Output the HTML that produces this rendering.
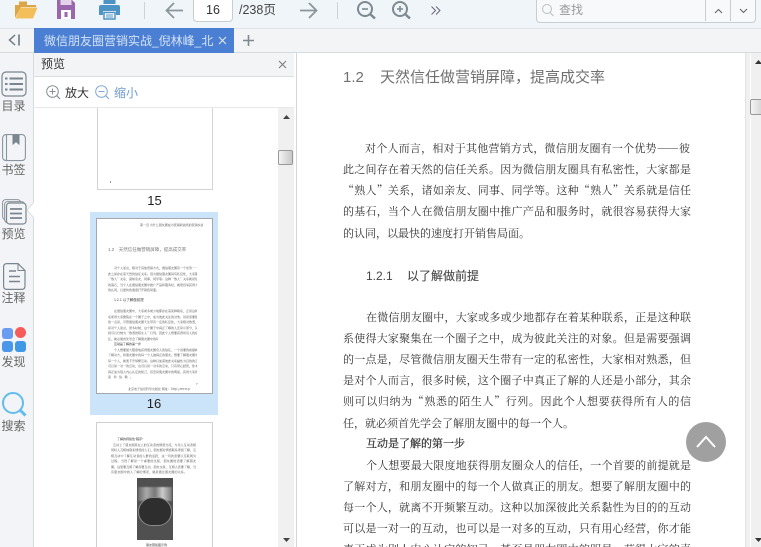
<!DOCTYPE html>
<html lang="zh">
<head>
<meta charset="utf-8">
<title>预览</title>
<style>
html,body{margin:0;padding:0;width:761px;height:547px;overflow:hidden;background:#fff;}
body{position:relative;font-family:"Liberation Sans","Noto Sans CJK SC",sans-serif;color:#333;}
.a{position:absolute;}
.t{position:absolute;white-space:nowrap;}
svg{position:absolute;overflow:visible;}
.l{position:absolute;left:343px;width:348px;height:16px;line-height:16px;font-family:"Noto Serif CJK SC",serif;font-size:11px;color:#333;text-align:justify;text-align-last:justify;white-space:nowrap;filter:blur(.35px);}
.side{position:absolute;left:0;width:27px;text-align:center;font-size:12px;line-height:14px;color:#666;}
.m{position:absolute;font-family:"Noto Serif CJK SC",serif;font-size:3px;line-height:4px;color:#444;text-align:justify;text-align-last:justify;white-space:nowrap;overflow:hidden;height:4px;filter:blur(.3px);}
</style>
</head>
<body>
<!-- toolbar -->
<div class="a" style="left:0;top:0;width:761px;height:28px;background:#f0f5f9;border-bottom:1px solid #e0e4e8;"></div>
<svg style="left:15px;top:0" width="24" height="20" viewBox="0 0 24 20">
<path d="M0 18V5h4V1.500h8V5h9v2H6z" fill="#dca648"/>
<path d="M0.500 18.500L5.500 7.500H22.500L18 18.500z" fill="#f4bf5a"/>
</svg>
<svg style="left:57px;top:0" width="18" height="19" viewBox="0 0 18 19">
<path d="M0 0H15L18 3V19H0z" fill="#9a66ae"/>
<rect x="3.500" y="0" width="11" height="5" fill="#e4d4ea"/>
<rect x="4" y="10" width="10" height="9" fill="#fff"/>
<rect x="7.500" y="12" width="3" height="5" fill="#9a66ae"/>
</svg>
<svg style="left:99px;top:0" width="21" height="20" viewBox="0 0 21 20">
<rect x="4.500" y="0" width="12" height="4" fill="#4d93c4"/>
<path d="M2 5H19Q21 5 21 7V15H17V11H4V15H0V7Q0 5 2 5z" fill="#4d93c4"/>
<path d="M5 12.500H16V19H5z" fill="#fff" stroke="#4d93c4" stroke-width="1.500"/>
<path d="M7 15H14M7 17H14" stroke="#4d93c4" stroke-width="1"/>
</svg>
<div class="a" style="left:144px;top:2px;width:1px;height:17px;background:#ccd2d6;"></div>
<svg style="left:165px;top:2px" width="18" height="17" viewBox="0 0 18 17"><path d="M18 8.500H1.500M9 1L1.500 8.500L9 16" fill="none" stroke="#8b959b" stroke-width="1.800"/></svg>
<div class="a" style="left:193px;top:-3px;width:38px;height:23px;background:#fff;border:1px solid #c8cdd0;border-radius:4px;"></div>
<div class="t" style="left:193px;top:1px;width:40px;text-align:center;font-size:12.500px;line-height:18px;color:#333;">16</div>
<div class="t" style="left:239px;top:0;font-size:12.500px;line-height:20px;color:#444;">/238页</div>
<svg style="left:300px;top:2px" width="18" height="17" viewBox="0 0 18 17"><path d="M0 8.500H16.500M9 1L16.500 8.500L9 16" fill="none" stroke="#8b959b" stroke-width="1.800"/></svg>
<div class="a" style="left:337px;top:2px;width:1px;height:17px;background:#ccd2d6;"></div>
<svg style="left:357px;top:1px" width="19" height="18" viewBox="0 0 19 18"><circle cx="8" cy="8" r="7" fill="none" stroke="#7d8a91" stroke-width="2"/><path d="M13 13L18 17.500" stroke="#7d8a91" stroke-width="2.500"/><path d="M5 8H11" stroke="#7d8a91" stroke-width="1.600"/></svg>
<svg style="left:392px;top:1px" width="19" height="18" viewBox="0 0 19 18"><circle cx="8" cy="8" r="7" fill="none" stroke="#7d8a91" stroke-width="2"/><path d="M13 13L18 17.500" stroke="#7d8a91" stroke-width="2.500"/><path d="M5 8H11M8 5V11" stroke="#7d8a91" stroke-width="1.600"/></svg>
<svg style="left:431px;top:6px" width="10" height="9" viewBox="0 0 10 9"><path d="M.5 .5L4.500 4.500L.5 8.500M5 .5L9 4.500L5 8.500" fill="none" stroke="#667" stroke-width="1"/></svg>
<div class="a" style="left:536px;top:-4px;width:218px;height:25px;background:#f7f9fb;border:1px solid #c8cdd2;border-radius:4px;"></div>
<div class="a" style="left:705px;top:0;width:1px;height:21px;background:#c8cdd2;"></div>
<div class="a" style="left:730px;top:0;width:1px;height:21px;background:#c8cdd2;"></div>
<svg style="left:542px;top:4px" width="12" height="13" viewBox="0 0 12 13"><circle cx="5" cy="5" r="4.500" fill="none" stroke="#b8bfc4" stroke-width="1"/><path d="M8 8.500L11.500 12" stroke="#b8bfc4" stroke-width="1"/></svg>
<div class="t" style="left:559px;top:0;font-size:12px;line-height:20px;color:#999;">查找</div>
<svg style="left:714px;top:8px" width="9" height="6" viewBox="0 0 9 6"><path d="M1 5L4.500 1.500L8 5" fill="none" stroke="#666" stroke-width="1.100"/></svg>
<svg style="left:739px;top:8px" width="9" height="6" viewBox="0 0 9 6"><path d="M1 1L4.500 4.500L8 1" fill="none" stroke="#666" stroke-width="1.100"/></svg>

<!-- tabbar -->
<div class="a" style="left:0;top:29px;width:761px;height:23px;background:#f2f4f6;border-bottom:1px solid #d8dbde;"></div>
<svg style="left:8px;top:34px" width="13" height="12" viewBox="0 0 13 12"><path d="M7 1L1.500 6L7 11" fill="none" stroke="#6e7a84" stroke-width="1.500"/><path d="M11 .5V11.500" stroke="#6e7a84" stroke-width="1.600"/></svg>
<div class="a" style="left:34px;top:28px;width:200px;height:25px;background:#4a7fd4;"></div>
<div class="t" style="left:44px;top:28px;width:170px;overflow:hidden;font-size:12px;line-height:26px;color:#d5e3f7;">微信朋友圈营销实战_倪林峰_北京</div>
<svg style="left:218px;top:36px" width="9" height="9" viewBox="0 0 9 9"><path d="M1 1L8 8M8 1L1 8" stroke="#e6eefa" stroke-width="1"/></svg>
<svg style="left:243px;top:35px" width="11" height="11" viewBox="0 0 11 11"><path d="M5.500 0V11M0 5.500H11" stroke="#7e8890" stroke-width="1.600"/></svg>

<!-- left sidebar -->
<div class="a" style="left:0;top:53px;width:33px;height:494px;background:#f2f4f7;border-right:1px solid #d8dbde;"></div>
<svg style="left:1px;top:71px" width="26" height="26" viewBox="0 0 26 26"><rect x="1" y="1" width="24" height="24" rx="4" fill="none" stroke="#7b858e" stroke-width="1.200"/><path d="M8.500 7.500H22M8.500 13H22M8.500 18.500H22" stroke="#7b858e" stroke-width="2"/><path d="M4 7.500H6.500M4 13H6.500M4 18.500H6.500" stroke="#7b858e" stroke-width="2"/></svg>
<div class="side" style="top:99px;">目录</div>
<svg style="left:2px;top:134px" width="24" height="28" viewBox="0 0 24 28"><rect x=".6" y=".6" width="22.800" height="26" rx="3.500" fill="none" stroke="#8b959d" stroke-width="1.100"/><path d="M4.500 1V26" stroke="#8b959d" stroke-width="1.100"/><path d="M11 1V10L14 7.500L17 10V1z" fill="#7b858e" stroke="#7b858e"/></svg>
<div class="side" style="top:163px;">书签</div>
<svg style="left:2px;top:199px" width="25" height="26" viewBox="0 0 25 26"><rect x=".6" y=".6" width="18" height="20" rx="3" fill="none" stroke="#8b959d" stroke-width="1"/><rect x="2.600" y="2.600" width="20" height="21" rx="3" fill="#f2f4f7" stroke="#8b959d" stroke-width="1"/><rect x="4.500" y="4" width="19.500" height="21" rx="3" fill="#f2f4f7" stroke="#7b858e" stroke-width="1.200"/><path d="M8 10H20M8 14.500H20M8 19H20" stroke="#7b858e" stroke-width="1.700"/></svg>
<div class="side" style="top:227px;">预览</div>
<svg style="left:27px;top:202px" width="8" height="16" viewBox="0 0 8 16"><path d="M7 0L0 8L7 16z" fill="#fff"/><path d="M7 0L0 8L7 16" fill="none" stroke="#dcdfe2" stroke-width="1"/></svg>
<svg style="left:3px;top:263px" width="23" height="27" viewBox="0 0 23 27"><path d="M4 .6H15L22 7.500V23Q22 26.400 18.500 26.400H4Q.6 26.400 .6 23V4Q.6 .6 4 .6z" fill="none" stroke="#7b858e" stroke-width="1.200"/><path d="M15 .6V7.500H22" fill="none" stroke="#7b858e" stroke-width="1"/><path d="M6 8H13M6 13.500H17M6 18.500H17" stroke="#7b858e" stroke-width="1.600"/></svg>
<div class="side" style="top:291px;">注释</div>
<div class="a" style="left:2px;top:328px;width:11px;height:11px;border-radius:3px;background:#6a9cf2;"></div>
<div class="a" style="left:15px;top:327px;width:11px;height:11px;border-radius:50%;background:#f65a5a;"></div>
<div class="a" style="left:2px;top:341px;width:11px;height:11px;border-radius:3px;background:#4c97ea;"></div>
<div class="a" style="left:15px;top:341px;width:11px;height:11px;border-radius:3px;background:#4098e6;"></div>
<div class="side" style="top:355px;">发现</div>
<svg style="left:1px;top:391px" width="26" height="26" viewBox="0 0 26 26"><circle cx="12" cy="12" r="10" fill="none" stroke="#62bcec" stroke-width="2"/><path d="M19 19L24.500 24.500" stroke="#62bcec" stroke-width="3"/></svg>
<div class="side" style="top:419px;">搜索</div>

<!-- preview panel -->
<div class="a" style="left:34px;top:53px;width:260px;height:23px;background:#f2f4f6;border-bottom:1px solid #dcdfe2;"></div>
<div class="t" style="left:41px;top:53px;font-size:12px;line-height:23px;color:#333;">预览</div>
<svg style="left:278px;top:60px" width="9" height="9" viewBox="0 0 9 9"><path d="M1 1L8 8M8 1L1 8" stroke="#777" stroke-width="1"/></svg>
<div class="a" style="left:34px;top:77px;width:260px;height:30px;background:#fff;border-bottom:1px solid #e6e8ea;"></div>
<svg style="left:46px;top:85px" width="15" height="15" viewBox="0 0 15 15"><circle cx="6.500" cy="6.500" r="5.800" fill="none" stroke="#8a8f94" stroke-width="1"/><path d="M10.500 10.500L14 14" stroke="#8a8f94" stroke-width="1.200"/><path d="M3.500 6.500H9.500M6.500 3.500V9.500" stroke="#8a8f94" stroke-width="1"/></svg>
<div class="t" style="left:65px;top:85px;font-size:12px;line-height:16px;color:#333;">放大</div>
<svg style="left:95px;top:85px" width="15" height="15" viewBox="0 0 15 15"><circle cx="6.500" cy="6.500" r="5.800" fill="none" stroke="#7fa8d8" stroke-width="1"/><path d="M10.500 10.500L14 14" stroke="#7fa8d8" stroke-width="1.200"/><path d="M3.500 6.500H9.500" stroke="#7fa8d8" stroke-width="1"/></svg>
<div class="t" style="left:114px;top:85px;font-size:12px;line-height:16px;color:#6f9bd0;">缩小</div>

<!-- thumbnails -->
<div class="a" style="left:97px;top:108px;width:114px;height:81px;background:#fff;border:1px solid #d4d4d4;border-top:0;"></div>
<div class="a" style="left:110px;top:181px;width:1px;height:2px;background:#999;"></div>
<div class="t" style="left:97px;top:193px;width:115px;text-align:center;font-size:13px;line-height:15px;color:#222;">15</div>

<div class="a" style="left:90px;top:212px;width:128px;height:203px;background:#cce4fa;"></div>
<div class="a" style="left:96px;top:218px;width:115px;height:174px;background:#fff;border:1px solid #a4a8ac;"></div>
<div class="m" style="left:140px;top:223px;width:63px;">第一章 为什么朋友圈成为营销新战场的营销实战</div>
<div class="t" style="left:108px;top:247px;font-size:4.500px;line-height:6px;color:#777;filter:blur(.25px);word-spacing:1px;">1.2 &nbsp;天然信任做营销屏障，提高成交率</div>
<div class="m" style="left:114px;top:266px;width:83px;">对个人而言，相对于其他营销方式，微信朋友圈有一个优势——彼</div>
<div class="m" style="left:108px;top:272px;width:89px;">此之间存在着天然的信任关系。因为微信朋友圈具有私密性，大家都是</div>
<div class="m" style="left:108px;top:277px;width:89px;">“熟人”关系，诸如亲友、同事、同学等。这种“熟人”关系就是信任</div>
<div class="m" style="left:108px;top:283px;width:89px;">的基石，当个人在微信朋友圈中推广产品和服务时，就很容易获得大家</div>
<div class="m" style="left:108px;top:288px;width:50px;">的认同，以最快的速度打开销售局面。</div>
<div class="t" style="left:114px;top:298px;font-size:3.500px;line-height:4px;color:#444;filter:blur(.2px);">1.2.1 以了解做前提</div>
<div class="m" style="left:114px;top:309px;width:83px;">在微信朋友圈中，大家或多或少地都存在着某种联系，正是这种联</div>
<div class="m" style="left:108px;top:315px;width:89px;">系使得大家聚集在一个圈子之中，成为彼此关注的对象。但是需要强调</div>
<div class="m" style="left:108px;top:320px;width:89px;">的一点是，尽管微信朋友圈天生带有一定的私密性，大家相对熟悉，但</div>
<div class="m" style="left:108px;top:326px;width:89px;">是对个人而言，很多时候，这个圈子中真正了解的人还是小部分，其余</div>
<div class="m" style="left:108px;top:331px;width:89px;">则可以归纳为“熟悉的陌生人”行列。因此个人想要获得所有人的信</div>
<div class="m" style="left:108px;top:337px;width:50px;">任，就必须首先学会了解朋友圈中的每一个人。</div>
<div class="t" style="left:114px;top:342px;font-size:3px;line-height:4px;color:#333;filter:blur(.2px);">互动是了解的第一步</div>
<div class="m" style="left:114px;top:348px;width:83px;">个人想要最大限度地获得朋友圈众人的信任，一个首要的前提就是</div>
<div class="m" style="left:108px;top:353px;width:89px;">了解对方，和朋友圈中的每一个人做真正的朋友。想要了解朋友圈中的</div>
<div class="m" style="left:108px;top:359px;width:89px;">每一个人，就离不开频繁互动。这种以加深彼此关系黏性为目的的互动</div>
<div class="m" style="left:108px;top:364px;width:89px;">可以是一对一的互动，也可以是一对多的互动，只有用心经营，你才能</div>
<div class="m" style="left:108px;top:370px;width:89px;">真正成为别人内心认定的知己，甚至是朋友圈中的明星，获得大家的喜</div>
<div class="m" style="left:108px;top:375px;width:25px;">爱和信赖。</div>
<div class="t" style="left:196px;top:382px;font-size:3px;line-height:4px;color:#555;">7</div>
<div class="m" style="left:128px;top:387px;width:62px;">北京电子信息科学出版社 网址：http://www.phei.com.cn</div>
<div class="t" style="left:90px;top:396px;width:128px;text-align:center;font-size:13px;line-height:16px;color:#222;">16</div>

<div class="a" style="left:96px;top:422px;width:115px;height:125px;background:#fff;border:1px solid #d0d0d0;border-bottom:0;"></div>
<div class="t" style="left:117px;top:437px;font-size:3px;line-height:4px;color:#333;filter:blur(.2px);">了解的持续性“程序”</div>
<div class="m" style="left:113px;top:443px;width:83px;">互动上了朋友圈是在人的互动者的情感交流，与众人互动者相</div>
<div class="m" style="left:111px;top:448px;width:85px;">同时人互相地联系情感的人们，朋友圈对情感联系得到了解，互</div>
<div class="m" style="left:111px;top:454px;width:85px;">相互动中了解互动者的人群的活跃，这一切的需要以互联网为</div>
<div class="m" style="left:111px;top:459px;width:85px;">过程。当然了解是一个重要的过程，朋友圈的需要了解朋友</div>
<div class="m" style="left:111px;top:465px;width:85px;">圈。这里要互相了解需要互动，朋友也是，互相人需要了解，当</div>
<div class="m" style="left:111px;top:470px;width:76px;">有朋友圈中的人了解的情况，就是通过朋友圈的关系。</div>
<div class="a" style="left:137px;top:478px;width:36px;height:62px;background:#505050;"></div>
<div class="a" style="left:138px;top:487px;width:34px;height:14px;background:linear-gradient(90deg,#6a6a6a,#aaa 25%,#777 50%,#ccc 72%,#777);filter:blur(.6px);"></div>
<div class="a" style="left:138px;top:497px;width:34px;height:29px;border-radius:15px 15px 14px 14px;background:#2e2e2e;border:1px solid #8a8a8a;box-sizing:border-box;"></div>
<div class="t" style="left:146px;top:543px;font-size:3px;line-height:4px;color:#444;">朋友圈截图示例</div>

<!-- panel scrollbar -->
<div class="a" style="left:278px;top:108px;width:16px;height:439px;background:#f0f0f0;"></div>
<svg style="left:283px;top:115px" width="7" height="4" viewBox="0 0 7 4"><path d="M3.500 0L7 4H0z" fill="#444"/></svg>
<div class="a" style="left:278px;top:150px;width:13px;height:13px;border:1px solid #999;border-radius:2px;background:linear-gradient(90deg,#f4f4f4,#c8c8c8);"></div>
<svg style="left:283px;top:538px" width="7" height="4" viewBox="0 0 7 4"><path d="M3.500 4L7 0H0z" fill="#444"/></svg>
<div class="a" style="left:296px;top:53px;width:1px;height:494px;background:#d4d7da;"></div>

<!-- document -->
<div class="t" style="left:343px;top:68px;font-size:15px;line-height:20px;color:#707070;filter:blur(.25px);">1.2</div>
<div class="t" style="left:380px;top:68px;font-size:15px;line-height:20px;color:#707070;filter:blur(.25px);">天然信任做营销屏障，提高成交率</div>

<div class="l" style="top:140px;left:365px;width:325px;">对个人而言，相对于其他营销方式，微信朋友圈有一个优势——彼</div>
<div class="l" style="top:161px;">此之间存在着天然的信任关系。因为微信朋友圈具有私密性，大家都是</div>
<div class="l" style="top:182px;">“熟人”关系，诸如亲友、同事、同学等。这种“熟人”关系就是信任</div>
<div class="l" style="top:203px;">的基石，当个人在微信朋友圈中推广产品和服务时，就很容易获得大家</div>
<div class="l" style="top:225px;width:184px;">的认同，以最快的速度打开销售局面。</div>
<div class="t" style="left:366px;top:268px;font-size:12px;line-height:16px;color:#444;filter:blur(.2px);">1.2.1</div>
<div class="t" style="left:407px;top:268px;font-size:12px;line-height:16px;color:#444;filter:blur(.2px);-webkit-text-stroke:.1px #444;">以了解做前提</div>
<div class="l" style="top:309px;left:366px;width:325px;">在微信朋友圈中，大家或多或少地都存在着某种联系，正是这种联</div>
<div class="l" style="top:330px;">系使得大家聚集在一个圈子之中，成为彼此关注的对象。但是需要强调</div>
<div class="l" style="top:351px;">的一点是，尽管微信朋友圈天生带有一定的私密性，大家相对熟悉，但</div>
<div class="l" style="top:372px;">是对个人而言，很多时候，这个圈子中真正了解的人还是小部分，其余</div>
<div class="l" style="top:393px;">则可以归纳为“熟悉的陌生人”行列。因此个人想要获得所有人的信</div>
<div class="l" style="top:415px;width:229px;">任，就必须首先学会了解朋友圈中的每一个人。</div>
<div class="t" style="left:366px;top:435px;font-size:11px;line-height:16px;color:#333;font-family:'Noto Serif CJK SC',serif;-webkit-text-stroke:.25px #333;filter:blur(.3px);">互动是了解的第一步</div>
<div class="l" style="top:457px;left:366px;width:325px;">个人想要最大限度地获得朋友圈众人的信任，一个首要的前提就是</div>
<div class="l" style="top:478px;">了解对方，和朋友圈中的每一个人做真正的朋友。想要了解朋友圈中的</div>
<div class="l" style="top:499px;">每一个人，就离不开频繁互动。这种以加深彼此关系黏性为目的的互动</div>
<div class="l" style="top:520px;">可以是一对一的互动，也可以是一对多的互动，只有用心经营，你才能</div>
<div class="l" style="top:541px;">真正成为别人内心认定的知己，甚至是朋友圈中的明星，获得大家的喜</div>

<!-- back to top -->
<div class="a" style="left:686px;top:422px;width:40px;height:40px;border-radius:50%;background:#a0a0a0;"></div>
<svg style="left:696px;top:435px" width="20" height="13" viewBox="0 0 20 13"><path d="M1 12L10 2L19 12" fill="none" stroke="#fff" stroke-width="2"/></svg>

<!-- main scrollbar -->
<div class="a" style="left:745px;top:53px;width:5px;height:494px;background:#f0f0f0;border-left:1px solid #e4e4e4;box-sizing:border-box;"></div>
<div class="a" style="left:750px;top:53px;width:1px;height:494px;background:#fff;"></div>
<div class="a" style="left:751px;top:53px;width:10px;height:494px;background:#f0f0f0;"></div>
<svg style="left:755px;top:60px" width="7" height="4" viewBox="0 0 7 4"><path d="M3.500 0L7 4H0z" fill="#333"/></svg>
<div class="a" style="left:750px;top:99px;width:14px;height:14px;border:1px solid #999;border-radius:2px;background:linear-gradient(90deg,#f4f4f4,#ccc);"></div>
<svg style="left:755px;top:538px" width="7" height="4" viewBox="0 0 7 4"><path d="M3.500 4L7 0H0z" fill="#333"/></svg>
</body>
</html>
